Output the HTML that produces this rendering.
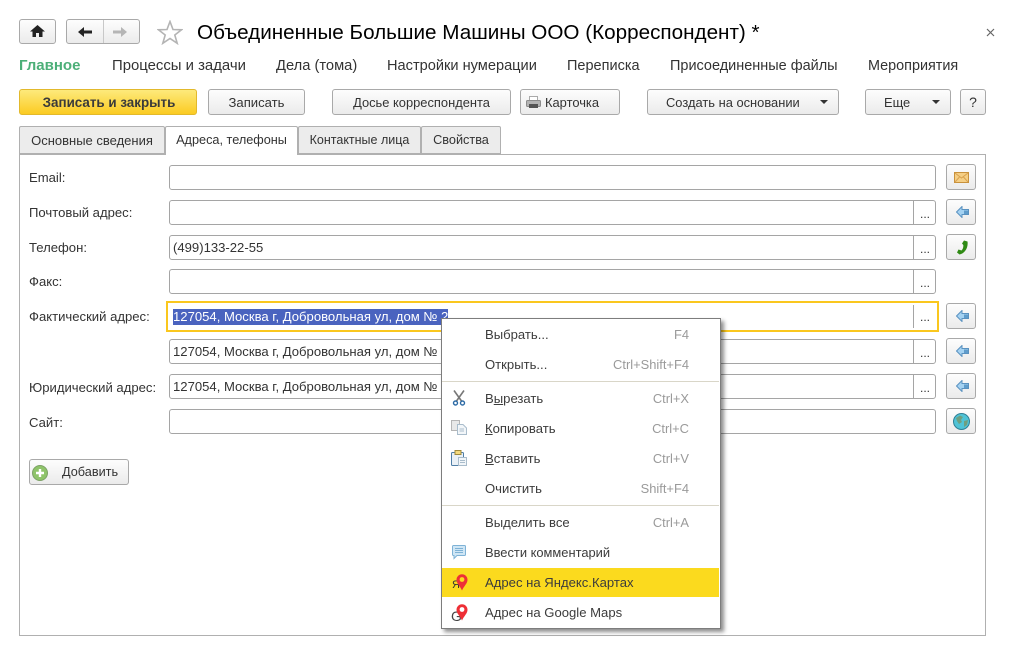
<!DOCTYPE html>
<html lang="ru"><head><meta charset="utf-8"><title>Объединенные Большие Машины ООО</title>
<style>
html,body{margin:0;padding:0;background:#fff}
#p{position:relative;width:1012px;height:650px;overflow:hidden;background:#fff;font-family:"Liberation Sans",sans-serif;font-size:13.1px;color:#333}
#p div,#p svg{position:absolute}
.t{white-space:nowrap;line-height:18px;height:18px}
.b{box-sizing:border-box;border:1px solid #a9a9a9;border-radius:3px;background:linear-gradient(#fdfdfd,#ebebeb);text-align:center;line-height:25px;white-space:nowrap;color:#333;font-size:12.9px}
.n{font-size:14.6px;line-height:18px;height:18px;white-space:nowrap;color:#333;top:57px}
.tab{box-sizing:border-box;border:1px solid #b0b0b0;background:#ececec;text-align:center;line-height:27px;top:126px;height:28px;border-radius:2px 2px 0 0;white-space:nowrap;font-size:12.7px}
.i{box-sizing:border-box;left:169px;width:767px;height:25px;border:1px solid #a5a5a5;border-radius:3px;background:#fff}
.s{left:913px;width:1px;height:25px;background:#a5a5a5}
.d{left:920px;width:12px;height:10px;font-size:12px;line-height:10px;color:#333}
.l{left:29px;color:#333}
.m{left:485px;color:#3c3c3c}
.k{right:323px;color:#9a9a9a;text-align:right;font-size:12.9px}
.v{left:173px;color:#333}
u{text-decoration:underline}
</style></head><body><div id="p">

<div class="b" style="left:19px;top:19px;width:37px;height:25px"></div>
<svg style="left:30px;top:25px" width="15" height="12" viewBox="0 0 15 12"><path d="M7.5 0 L15 6.5 H12.5 V12 H9 V8 H6 V12 H2.5 V6.5 H0 Z" fill="#222"/></svg>
<div class="b" style="left:66px;top:19px;width:74px;height:25px"></div>
<div style="left:103px;top:20px;width:1px;height:23px;background:#c8c8c8"></div>
<svg style="left:78px;top:27px" width="14" height="10" viewBox="0 0 14 10"><path d="M0 5 L6 0 V3.5 H14 V6.5 H6 V10 Z" fill="#222"/></svg>
<svg style="left:113px;top:27px" width="14" height="10" viewBox="0 0 14 10"><path d="M14 5 L8 0 V3.5 H0 V6.5 H8 V10 Z" fill="#b5b5b5"/></svg>
<svg style="left:157px;top:20px" width="26" height="25" viewBox="0 0 26 25"><path d="M13 1.5 L16 9.5 L24.5 9.8 L17.8 15 L20.2 23.3 L13 18.5 L5.8 23.3 L8.2 15 L1.5 9.8 L10 9.5 Z" fill="#fff" stroke="#b4b4b4" stroke-width="1.6"/></svg>
<div class="t" style="left:197px;top:20px;font-size:20.66px;line-height:26px;height:26px;color:#000">Объединенные Большие Машины ООО (Корреспондент) *</div>
<svg style="left:986px;top:28px" width="9" height="9" viewBox="0 0 9 9"><path d="M1 1 L8 8 M8 1 L1 8" stroke="#666" stroke-width="1.2"/></svg>

<div class="n" style="left:19px;font-weight:bold;color:#4caf78;font-size:15px">Главное</div>
<div class="n" style="left:112px;font-size:14.9px">Процессы и задачи</div>
<div class="n" style="left:276px;font-size:14.7px">Дела (тома)</div>
<div class="n" style="left:387px">Настройки нумерации</div>
<div class="n" style="left:567px;font-size:14.5px">Переписка</div>
<div class="n" style="left:670px;font-size:14.47px">Присоединенные файлы</div>
<div class="n" style="left:868px;font-size:14.4px">Мероприятия</div>

<div class="b" style="left:19px;top:89px;width:178px;height:26px;background:linear-gradient(#fdea7c,#fbcb22);border-color:#e2b92c;font-weight:bold;font-size:13.4px;color:#3a3a3a;padding-left:2px">Записать и закрыть</div>
<div class="b" style="left:208px;top:89px;width:97px;height:26px;font-size:13.1px">Записать</div>
<div class="b" style="left:332px;top:89px;width:179px;height:26px">Досье корреспондента</div>
<div class="b" style="left:520px;top:89px;width:100px;height:26px;text-align:left;padding-left:24px">Карточка</div>
<svg style="left:526px;top:96px" width="15" height="13" viewBox="0 0 15 13"><rect x="3.5" y="0.5" width="8" height="5" fill="#fff" stroke="#aaa"/><rect x="0.5" y="4.5" width="14" height="6" rx="1" fill="#b4b4b4" stroke="#8c8c8c"/><rect x="3" y="8" width="9" height="4" fill="#555"/></svg>
<div class="b" style="left:647px;top:89px;width:192px;height:26px;text-align:left;padding-left:18px">Создать на основании</div>
<svg style="left:820px;top:100px" width="8" height="4" viewBox="0 0 8 4"><path d="M0 0 H8 L4 4 Z" fill="#333"/></svg>
<div class="b" style="left:865px;top:89px;width:86px;height:26px;text-align:left;padding-left:18px">Еще</div>
<svg style="left:932px;top:100px" width="8" height="4" viewBox="0 0 8 4"><path d="M0 0 H8 L4 4 Z" fill="#333"/></svg>
<div class="b" style="left:960px;top:89px;width:26px;height:26px;font-size:14px">?</div>

<div style="left:19px;top:154px;width:967px;height:482px;box-sizing:border-box;border:1px solid #b0b0b0;background:#fff"></div>
<div class="tab" style="left:19px;width:146px;font-size:13px">Основные сведения</div>
<div class="tab" style="left:165px;width:133px;height:29px;background:#fff;border-bottom:0">Адреса, телефоны</div>
<div class="tab" style="left:298px;width:123px;font-size:12.5px">Контактные лица</div>
<div class="tab" style="left:421px;width:80px">Свойства</div>

<div class="t l" style="top:169px">Email:</div>
<div class="t l" style="top:204px">Почтовый адрес:</div>
<div class="t l" style="top:239px">Телефон:</div>
<div class="t l" style="top:273px">Факс:</div>
<div class="t l" style="top:308px">Фактический адрес:</div>
<div class="t l" style="top:379px">Юридический адрес:</div>
<div class="t l" style="top:414px">Сайт:</div>

<div class="i" style="top:165px"></div>
<div class="i" style="top:200px"></div><div class="s" style="top:200px"></div><div class="d" style="top:209px">...</div>
<div class="i" style="top:235px"></div><div class="s" style="top:235px"></div><div class="d" style="top:244px">...</div>
<div class="i" style="top:269px"></div><div class="s" style="top:269px"></div><div class="d" style="top:278px">...</div>
<div class="i" style="left:166px;top:301px;width:773px;height:31px;border:2px solid #fac71e;border-radius:0"></div><div class="s" style="top:305px;height:23px"></div><div class="d" style="top:312px">...</div>
<div class="i" style="top:339px"></div><div class="s" style="top:339px"></div><div class="d" style="top:348px">...</div>
<div class="i" style="top:374px"></div><div class="s" style="top:374px"></div><div class="d" style="top:383px">...</div>
<div class="i" style="top:409px"></div>

<div class="t v" style="top:239px">(499)133-22-55</div>
<div style="left:173px;top:309px;width:275px;height:16px;background:#4a63bf"></div>
<div class="t v" style="top:308px;color:#fff">127054, Москва г, Добровольная ул, дом № 2</div>
<div class="t v" style="top:343px">127054, Москва г, Добровольная ул, дом № 2</div>
<div class="t v" style="top:378px">127054, Москва г, Добровольная ул, дом № 2</div>

<div class="b" style="left:946px;top:164px;width:30px;height:26px"></div>
<svg style="left:954px;top:172px" width="15" height="12" viewBox="0 0 15 12"><rect x="0.5" y="0.5" width="14" height="10" fill="#f5cf85" stroke="#c8913c"/><path d="M1 1 L7.5 6 L14 1 M1 10 L5.5 5 M14 10 L9.5 5" stroke="#d9a24f" fill="none"/></svg>
<div class="b" style="left:946px;top:199px;width:30px;height:26px"></div>
<div class="b" style="left:946px;top:234px;width:30px;height:26px"></div>
<svg style="left:957px;top:240px" width="11" height="15" viewBox="0 0 11 15"><path d="M7 .5 L10.5 1.5 C11.5 8 7.5 13.5 2.5 14.5 L0 12.5 L1.5 9.5 L4.5 10.5 C6 9 6.5 7 6.3 5 L5 3.5 Z" fill="#2f8a14"/></svg>
<div class="b" style="left:946px;top:303px;width:30px;height:26px"></div>
<div class="b" style="left:946px;top:338px;width:30px;height:26px"></div>
<div class="b" style="left:946px;top:373px;width:30px;height:26px"></div>
<svg style="left:956px;top:206px" width="13" height="12" viewBox="0 0 13 12"><path d="M0.5 6 L6 0.5 V3.5 H12.5 V8.5 H6 V11.5 Z" fill="#a4d2f2" stroke="#5a92c0"/><rect x="8" y="4.5" width="4" height="3.5" fill="#5f9ccb"/></svg>
<svg style="left:956px;top:310px" width="13" height="12" viewBox="0 0 13 12"><path d="M0.5 6 L6 0.5 V3.5 H12.5 V8.5 H6 V11.5 Z" fill="#a4d2f2" stroke="#5a92c0"/><rect x="8" y="4.5" width="4" height="3.5" fill="#5f9ccb"/></svg>
<svg style="left:956px;top:345px" width="13" height="12" viewBox="0 0 13 12"><path d="M0.5 6 L6 0.5 V3.5 H12.5 V8.5 H6 V11.5 Z" fill="#a4d2f2" stroke="#5a92c0"/><rect x="8" y="4.5" width="4" height="3.5" fill="#5f9ccb"/></svg>
<svg style="left:956px;top:380px" width="13" height="12" viewBox="0 0 13 12"><path d="M0.5 6 L6 0.5 V3.5 H12.5 V8.5 H6 V11.5 Z" fill="#a4d2f2" stroke="#5a92c0"/><rect x="8" y="4.5" width="4" height="3.5" fill="#5f9ccb"/></svg>
<div class="b" style="left:946px;top:408px;width:30px;height:26px"></div>
<svg style="left:953px;top:413px" width="17" height="17" viewBox="0 0 17 17"><circle cx="8.5" cy="8.5" r="8" fill="#4fc3d6" stroke="#2f7f95"/><path d="M3 5 L7 2.5 L10 4 L8 7 L9 9 L6 11 L4 8 Z M11 8 L15 7 L14 12 L11 14 Z" fill="#6f9f80"/></svg>

<div class="b" style="left:29px;top:459px;width:100px;height:26px;text-align:left;padding-left:32px;font-size:12.7px">Добавить</div>
<svg style="left:32px;top:465px" width="16" height="16" viewBox="0 0 16 16"><circle cx="8" cy="8" r="7.5" fill="#8fc46a" stroke="#7da267"/><path d="M8 4 V12 M4 8 H12" stroke="#fff" stroke-width="2.4"/></svg>

<div style="left:441px;top:318px;width:280px;height:311px;box-sizing:border-box;border:1px solid #7d7d7d;background:#fff;box-shadow:3px 3px 4px rgba(0,0,0,.45)"></div>
<div style="left:442px;top:381px;width:277px;height:1px;background:#d9d6c8"></div>
<div style="left:442px;top:505px;width:277px;height:1px;background:#d9d6c8"></div>
<div style="left:442px;top:568px;width:277px;height:29px;background:#fbda1e"></div>

<div class="t m" style="top:326px">Выбрать...</div><div class="t k" style="top:326px">F4</div>
<div class="t m" style="top:356px">Открыть...</div><div class="t k" style="top:356px">Ctrl+Shift+F4</div>
<div class="t m" style="top:390px">В<u>ы</u>резать</div><div class="t k" style="top:390px">Ctrl+X</div>
<div class="t m" style="top:420px"><u>К</u>опировать</div><div class="t k" style="top:420px">Ctrl+C</div>
<div class="t m" style="top:450px"><u>В</u>ставить</div><div class="t k" style="top:450px">Ctrl+V</div>
<div class="t m" style="top:480px">Очистить</div><div class="t k" style="top:480px">Shift+F4</div>
<div class="t m" style="top:514px">Выделить все</div><div class="t k" style="top:514px">Ctrl+A</div>
<div class="t m" style="top:544px;font-size:12.9px">Ввести комментарий</div>
<div class="t m" style="top:574px">Адрес на Яндекс.Картах</div>
<div class="t m" style="top:604px">Адрес на Google Maps</div>

<svg style="left:452px;top:390px" width="14" height="16" viewBox="0 0 14 16"><path d="M2 0.5 L9.5 11 M12 0.5 L4.5 11" stroke="#777" stroke-width="1.6"/><circle cx="3.5" cy="13" r="2" fill="none" stroke="#2c6aa5" stroke-width="1.4"/><circle cx="10.5" cy="13" r="2" fill="none" stroke="#2c6aa5" stroke-width="1.4"/></svg>
<svg style="left:451px;top:420px" width="16" height="15" viewBox="0 0 16 15"><rect x="0.5" y="0.5" width="8" height="10" fill="#e8e8e8" stroke="#b5b5b5"/><path d="M6.5 4.5 H12 L15.5 8 V14.5 H6.5 Z" fill="#f2f6f9" stroke="#a9bccb"/><path d="M8.5 9 H13 M8.5 11 H13" stroke="#a9bccb"/></svg>
<svg style="left:451px;top:450px" width="16" height="16" viewBox="0 0 16 16"><rect x="0.5" y="2.5" width="12" height="13" rx="1" fill="#eaf1f7" stroke="#4f7ea6"/><rect x="4" y="0.5" width="6" height="4" fill="#f3d97c" stroke="#a08a3c"/><path d="M7.5 7.5 H15.5 V15.5 H7.5 Z" fill="#f2f6f9" stroke="#a9bccb"/><path d="M9 10.5 H14 M9 12.5 H14" stroke="#a9bccb"/></svg>
<svg style="left:452px;top:545px" width="14" height="15" viewBox="0 0 14 15"><path d="M1.5 0.5 H12.5 A1 1 0 0 1 13.5 1.5 V9.5 A1 1 0 0 1 12.5 10.5 H5 L2 13.5 V10.5 H1.5 A1 1 0 0 1 .5 9.5 V1.5 A1 1 0 0 1 1.5 .5 Z" fill="#cfe6f5" stroke="#7eb2d6"/><path d="M3 3.5 H11 M3 5.5 H11 M3 7.5 H11" stroke="#7eb2d6"/></svg>

<div style="left:452px;top:579px;font-size:11px;line-height:13px;color:#333">Я</div>
<svg style="left:456px;top:574px" width="12" height="17" viewBox="0 0 12 17"><path d="M6 16.5 C4 12 .5 9.5 .5 5.8 A5.5 5.5 0 0 1 11.5 5.8 C11.5 9.5 8 12 6 16.5 Z" fill="#ee2f36"/><circle cx="6" cy="5.5" r="2.4" fill="#fbda1e"/></svg>
<div style="left:451px;top:609px;font-size:14px;line-height:14px;color:#444">G</div>
<svg style="left:456px;top:604px" width="12" height="17" viewBox="0 0 12 17"><path d="M6 16.5 C4 12 .5 9.5 .5 5.8 A5.5 5.5 0 0 1 11.5 5.8 C11.5 9.5 8 12 6 16.5 Z" fill="#ee2f36"/><circle cx="6" cy="5.5" r="2.4" fill="#fff"/></svg>

</div></body></html>
